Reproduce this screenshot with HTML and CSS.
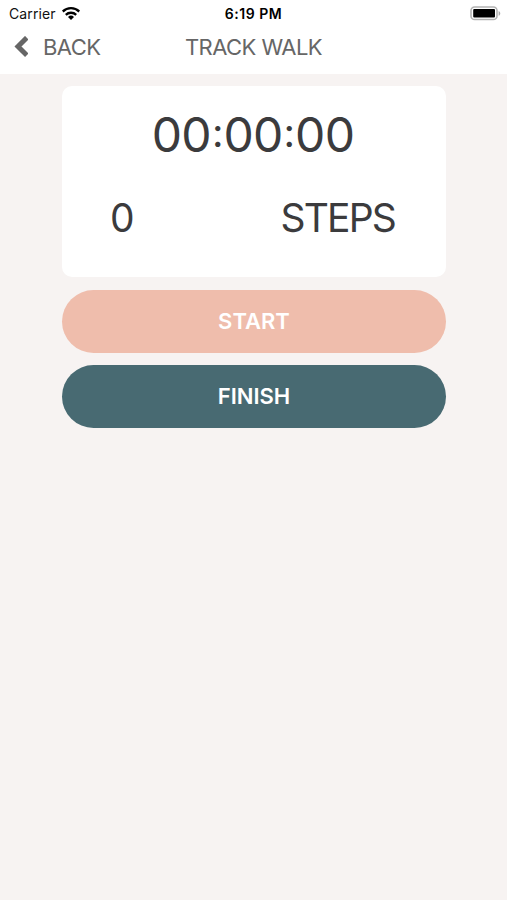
FILE: index.html
```html
<!DOCTYPE html>
<html lang="en">
<head>
<meta charset="utf-8">
<title>Track Walk</title>
<link rel="stylesheet" href="styles.css">
</head>
<body>
<header class="top">
  <div class="status">
    <div class="carrier"><span>Carrier</span>
      <svg class="wifi" viewBox="0 0 18 13" width="18" height="14"><path d="M0 4.100a13 13 0 0 1 18 0l-1.500 1.800a10.700 10.700 0 0 0-15 0z"/><path d="M3 7.400a8.700 8.700 0 0 1 12 0l-1.600 1.900a6.200 6.200 0 0 0-8.800 0z"/><path d="M6 10.500a4.300 4.300 0 0 1 6 0L9 13.500z"/></svg>
    </div>
    <div class="time">6:19 PM</div>
    <svg class="battery" viewBox="0 0 31 15" width="31" height="15"><rect class="shell" x="1" y="1" width="26" height="12.500" rx="3.600"/><rect x="3.200" y="2.900" width="21.800" height="8.700" rx="1"/><path class="tip" d="M28.600 4.900c2.200.8 2.200 4 0 4.800z"/></svg>
  </div>
  <nav class="nav">
    <div class="back"><svg viewBox="0 0 15 22" width="15" height="22"><path d="M13.800 1.700L5 10.500l8.800 8.800"/></svg><span>BACK</span></div>
    <h1 class="title">TRACK WALK</h1>
    <span></span>
  </nav>
</header>
<main class="content">
  <section class="card">
    <div class="timer">00<span class="colon">:</span>00<span class="colon">:</span>00</div>
    <div class="steps"><span class="count">0</span><span class="unit">STEPS</span></div>
  </section>
  <button class="btn start">START</button>
  <button class="btn finish">FINISH</button>
</main>
</body>
</html>
```
FILE: styles.css
```css
* { box-sizing: border-box; }
body { margin: 0; min-height: 900px; background: #f7f3f2; font-family: Inter, "Liberation Sans", sans-serif; color: #3b3b3d; }
.top { height: 74px; background: #fff; }
.status { display: grid; grid-template-columns: 1fr auto 1fr; align-items: center; height: 27px; padding: 0 6px 0 9px; color: #111; font-size: 14px; }
.carrier { display: flex; align-items: center; gap: 6px; letter-spacing: .12px; }
.wifi { margin-top: -2px; }
.time { margin-right: 3px; font-weight: 600; letter-spacing: .5px; color: #000; }
.battery { justify-self: end; }
.shell { fill: none; stroke: #b3b3b3; stroke-width: 1.6; }
.tip { fill: #aaa; }
.nav { display: grid; grid-template-columns: 1fr auto 1fr; align-items: center; height: 40px; padding: 0 13px; color: #666; font-size: 22px; letter-spacing: -.55px; }
.back { display: flex; align-items: center; gap: 15px; }
.back path { fill: none; stroke: #666; stroke-width: 5; }
.title { margin: 0; font-size: 22px; font-weight: 400; }
.content { display: flex; flex-direction: column; gap: 12.5px; width: 384px; margin: 12px auto 0 62px; }
.card { height: 191px; background: #fff; border-radius: 10px; }
.timer { padding-top: 19px; text-align: center; font-size: 48px; line-height: 60px; letter-spacing: -.7px; text-indent: -2px; }
.colon { margin: 0 1px; font-size: 40px; line-height: 1; vertical-align: 5px; letter-spacing: -1px; }
.steps { display: flex; justify-content: space-between; height: 78px; padding: 28px 51px 0 48px; font-size: 39px; line-height: 50px; letter-spacing: -1.8px; }
.btn { height: 63px; border: 0; border-radius: 32px; padding: 0 0 1px; color: #fff; font: 600 22px Inter, "Liberation Sans", sans-serif; }
.start { background: #efbdac; }
.finish { background: #486a72; }
```
